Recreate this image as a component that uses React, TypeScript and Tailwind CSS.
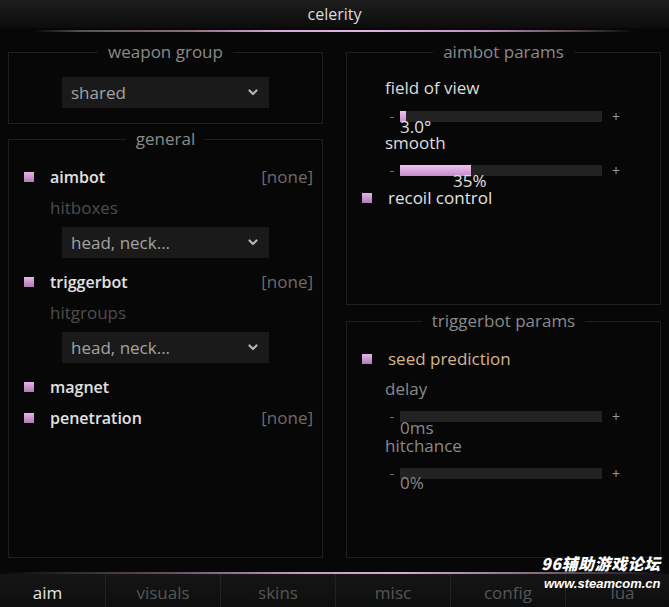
import React from "react";

const font = { fontFamily: '"Open Sans", "Noto Sans", sans-serif' };

function Box({ title, className, children }: { title: string; className: string; children?: React.ReactNode }) {
  return (
    <div className={`relative border border-[#1f1f1f] ${className}`}>
      <div className="absolute left-0 right-0 top-[-12px] flex justify-center">
        <span className="bg-[#070707] px-[10px] text-[17px] leading-[22px] text-[#8a8a8a]">{title}</span>
      </div>
      {children}
    </div>
  );
}

function Check() {
  return <div className="h-[10px] w-[10px] shrink-0 bg-gradient-to-b from-[#e6b4e6] to-[#b07cb2]" />;
}

function Chevron() {
  return (
    <svg width="10" height="7" viewBox="0 0 10 7" className="shrink-0">
      <path d="M1.5 1.5 L5 5 L8.5 1.5" stroke="#b5b5b5" strokeWidth="2.2" fill="none" strokeLinecap="round" strokeLinejoin="round" />
    </svg>
  );
}

function Dropdown({ text, className = "" }: { text: string; className?: string }) {
  return (
    <div className={`mx-auto flex h-[31px] w-[207px] items-center justify-between bg-[#1a1a1a] pl-[9px] pr-[11px] ${className}`}>
      <span className="text-[17px] text-[#a3a3a3]">{text}</span>
      <Chevron />
    </div>
  );
}

function Slider({ pct, className = "" }: { pct: number; className?: string }) {
  return (
    <div className={`flex h-[11px] items-center ${className}`}>
      <span className="w-[12px] pl-[2px] text-[12px] leading-none text-[#8a8a8a]">-</span>
      <div className="h-[11px] w-[202px] bg-[#222222]">
        <div className="h-full bg-gradient-to-b from-[#f0c2f0] to-[#c68cc8]" style={{ width: `${pct}%` }} />
      </div>
      <span className="ml-[10px] text-[14px] leading-none text-[#9a9a9a]">+</span>
    </div>
  );
}

export default function App() {
  const tabs = ["aim", "visuals", "skins", "misc", "config", "lua"];
  return (
    <div style={font} className="relative flex h-[607px] w-[669px] flex-col overflow-hidden bg-[#070707]">
      <div className="flex h-[28px] items-center justify-center bg-gradient-to-b from-[#1e1e1e] to-[#0c0c0c] text-[16px] text-[#dcdcdc]">
        celerity
      </div>
      <div className="mx-[35px] mt-[2px] h-[2px] bg-[linear-gradient(to_right,transparent,#555_8%,#8a6a7a_25%,#d6a6d6_40%,#e2b4e2_55%,#c090c0_75%,#5a4a50_90%,transparent)]" />

      <div className="flex h-[540px] gap-[23px] px-[8px] pt-[20px]">
        {/* left column */}
        <div className="flex w-[315px] flex-col">
          <Box title="weapon group" className="h-[72px] pt-[24px]">
            <Dropdown text="shared" />
          </Box>
          <Box title="general" className="mt-[15px] h-[419px] pt-[27px]">
            <div className="flex h-[20px] items-center pl-[15px] pr-[9px]">
              <Check />
              <span className="ml-[16px] flex-1 text-[16px] font-semibold text-[#e2e2e2]">aimbot</span>
              <span className="text-[17px] text-[#6c6c6c]">[none]</span>
            </div>
            <div className="mt-[11px] flex h-[20px] items-center pl-[41px] text-[17px] text-[#4e4e4e]">hitboxes</div>
            <Dropdown text="head, neck..." className="mt-[9px]" />
            <div className="mt-[14px] flex h-[20px] items-center pl-[15px] pr-[9px]">
              <Check />
              <span className="ml-[16px] flex-1 text-[16px] font-semibold text-[#e2e2e2]">triggerbot</span>
              <span className="text-[17px] text-[#6c6c6c]">[none]</span>
            </div>
            <div className="mt-[11px] flex h-[20px] items-center pl-[41px] text-[17px] text-[#4e4e4e]">hitgroups</div>
            <Dropdown text="head, neck..." className="mt-[9px]" />
            <div className="mt-[14px] flex h-[20px] items-center pl-[15px] pr-[9px]">
              <Check />
              <span className="ml-[16px] flex-1 text-[16px] font-semibold text-[#e2e2e2]">magnet</span>
            </div>
            <div className="mt-[11px] flex h-[20px] items-center pl-[15px] pr-[9px]">
              <Check />
              <span className="ml-[16px] flex-1 text-[16px] font-semibold text-[#e2e2e2]">penetration</span>
              <span className="text-[17px] text-[#6c6c6c]">[none]</span>
            </div>
          </Box>
        </div>

        {/* right column */}
        <div className="flex w-[315px] flex-col">
          <Box title="aimbot params" className="h-[253px] pt-[25px]">
            <div className="flex h-[20px] items-center pl-[38px] text-[17px] text-[#dedede]">field of view</div>
            <Slider pct={3} className="ml-[41px] mt-[13px]" />
            <div className="ml-[53px] mt-[-3px] h-[16px] text-[17px] leading-[16px] text-[#e0e0e0]">3.0°</div>
            <div className="mt-[-2px] flex h-[20px] items-center pl-[38px] text-[17px] text-[#dedede]">smooth</div>
            <Slider pct={35} className="ml-[41px] mt-[12px]" />
            <div className="ml-[106px] mt-[-3px] h-[16px] text-[17px] leading-[16px] text-[#e0e0e0]">35%</div>
            <div className="mt-[-1px] flex h-[20px] items-center pl-[15px]">
              <Check />
              <span className="ml-[16px] text-[17px] text-[#e2e2e2]">recoil control</span>
            </div>
          </Box>
          <Box title="triggerbot params" className="mt-[16px] h-[237px] pt-[27px]">
            <div className="flex h-[20px] items-center pl-[15px]">
              <Check />
              <span className="ml-[16px] text-[17px] text-[#d8b48e]">seed prediction</span>
            </div>
            <div className="mt-[10px] flex h-[20px] items-center pl-[38px] text-[17px] text-[#8a8a8a]">delay</div>
            <Slider pct={0} className="ml-[41px] mt-[12px]" />
            <div className="ml-[53px] mt-[-2px] h-[16px] text-[17px] leading-[16px] text-[#8a8a8a]">0ms</div>
            <div className="flex h-[20px] items-center pl-[38px] text-[17px] text-[#8a8a8a]">hitchance</div>
            <Slider pct={0} className="ml-[41px] mt-[12px]" />
            <div className="ml-[53px] mt-[-4px] h-[16px] text-[17px] leading-[16px] text-[#8a8a8a]">0%</div>
          </Box>
        </div>
      </div>

      <div className="h-[2px] bg-[linear-gradient(to_right,transparent,#2a2a2a_10%,#6a4a60_25%,#c89ac8_45%,#d8aad8_60%,#8a6a80_80%,transparent)]" />
      <div className="flex h-[33px] bg-gradient-to-b from-[#151515] to-[#0e0e0e] text-[17px]">
        {tabs.map((t, i) => (
          <div
            key={t}
            className={
              i === 0
                ? "flex w-[105px] shrink-0 items-center justify-center pr-[10px] pt-[4px] text-[#e4e4e4]"
                : i === 5
                ? "flex w-[104px] shrink-0 items-center justify-center border-l border-[#232323] pl-[10px] pt-[4px] text-[#565656]"
                : "flex w-[115px] shrink-0 items-center justify-center border-l border-[#232323] pt-[4px] text-[#565656]"
            }
          >
            {t}
          </div>
        ))}
      </div>

      <div className="absolute left-[541px] top-[553px] flex flex-col items-end">
        <span
          className="text-[16px] font-black italic leading-[20px] tracking-[0.5px] text-white"
          style={{ fontFamily: '"Noto Sans CJK SC", "Noto Sans", sans-serif' }}
        >
          96辅助游戏论坛
        </span>
        <span
          className="mt-[3px] text-[13px] font-bold italic leading-[16px] text-white"
          style={{ fontFamily: '"Liberation Sans", Arial, sans-serif' }}
        >
          www.steamcom.cn
        </span>
      </div>
    </div>
  );
}
